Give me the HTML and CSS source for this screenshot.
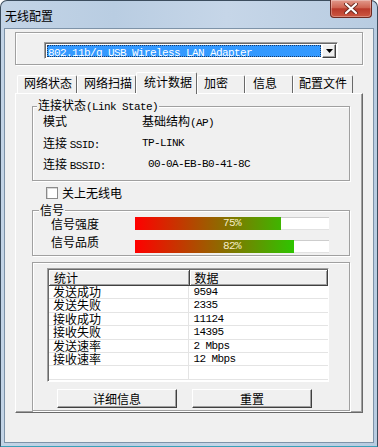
FILE: index.html
```html
<!DOCTYPE html>
<html lang="zh-CN">
<head>
<meta charset="UTF-8">
<title>无线配置</title>
<link rel="stylesheet" href="styles.css">
</head>
<body>

<div class="window">
    <div class="titlebar">
        <span class="title">无线配置</span>
        <div class="close">
            <svg width="14" height="11" viewBox="0 0 14 11">
                <path d="M2 1 L12 10 M12 1 L2 10" stroke="#6b2a20" stroke-width="4" stroke-linecap="round"/>
                <path d="M2 1 L12 10 M12 1 L2 10" stroke="#fff" stroke-width="2.2" stroke-linecap="round"/>
            </svg>
        </div>
    </div>

    <div class="client">
        <div class="adapter-box">
            <div class="combo">
                <div class="combo-value"><span class="en">802.11b/g USB Wireless LAN Adapter</span></div>
                <div class="combo-btn">
                    <svg width="7" height="4" viewBox="0 0 7 4"><path d="M0 0 H7 L3.5 4 Z" fill="#000"/></svg>
                </div>
            </div>
        </div>

        <div class="tabs">
            <div class="tab w60">网络状态</div>
            <div class="tab w59">网络扫描</div>
            <div class="tab active">统计数据</div>
            <div class="tab w48">加密</div>
            <div class="tab w48 p7">信息</div>
            <div class="tab w60 p5">配置文件</div>
        </div>

        <div class="panel">
            <fieldset class="group link">
                <legend>连接状态<span class="en">(Link State)</span></legend>
                <div class="info">
                    <span>模式</span><span>基础结构<span class="en">(AP)</span></span>
                    <span>连接 <span class="en">SSID:</span></span><span class="en">TP-LINK</span>
                    <span>连接 <span class="en">BSSID:</span></span><span class="en bssid">00-0A-EB-B0-41-8C</span>
                </div>
            </fieldset>

            <div class="check"><span class="box"></span>关上无线电</div>

            <fieldset class="group signal">
                <legend>信号</legend>
                <div class="sig">
                    <span class="sig-label">信号强度</span>
                    <div class="bar">
                        <div class="fill" style="width: 75%"></div>
                        <span class="en pct">75%</span>
                    </div>
                    <span class="sig-label second">信号品质</span>
                    <div class="bar">
                        <div class="fill" style="width: 82%"></div>
                        <span class="en pct">82%</span>
                    </div>
                </div>
            </fieldset>

            <fieldset class="group stats">
                <div class="list">
                    <div class="head">
                        <div class="hcell">统计</div>
                        <div class="hcell">数据</div>
                    </div>
                    <div class="row"><div class="cell">发送成功</div><div class="cell en">9594</div></div>
                    <div class="row"><div class="cell">发送失败</div><div class="cell en">2335</div></div>
                    <div class="row"><div class="cell">接收成功</div><div class="cell en">11124</div></div>
                    <div class="row"><div class="cell">接收失败</div><div class="cell en">14395</div></div>
                    <div class="row"><div class="cell">发送速率</div><div class="cell en">2 Mbps</div></div>
                    <div class="row"><div class="cell">接收速率</div><div class="cell en">12 Mbps</div></div>
                    <div class="row"><div class="cell"></div><div class="cell"></div></div>
                </div>
                <div class="buttons">
                    <div class="btn">详细信息</div>
                    <div class="btn">重置</div>
                </div>
            </fieldset>
        </div>
    </div>
</div>

</body>
</html>
```

FILE: styles.css
```css
* {
    box-sizing: border-box;
}
body {
    margin: 0;
    font-family: "Noto Sans CJK SC", sans-serif;
    font-size: 12px;
    color: #000;
    background: #fff;
}
.en {
    font-family: "Liberation Mono", monospace;
    font-size: 11px;
    letter-spacing: -0.6px;
}

/* window frame */
.window {
    width: 378px;
    height: 447px;
    display: flex;
    flex-direction: column;
    padding: 0 3px 3px;
    border: 1px solid #3c4d5e;
    border-bottom-color: #3aa0b8;
    border-radius: 7px 7px 0 0;
    background: linear-gradient(to right, #c3d4e6, #b9cde2 30%, #c6d6e8 60%, #b8cce1);
}
.titlebar {
    height: 27px;
    display: flex;
    align-items: flex-start;
}
.title {
    margin: 7px 0 0 1px;
    line-height: 16px;
}
.close {
    margin: -1px 2px 0 auto;
    width: 42px;
    height: 18px;
    border: 1px solid #6e2a22;
    border-top: none;
    border-radius: 0 0 4px 4px;
    background: linear-gradient(#e29a8c, #cf6452 45%, #b9392a 52%, #cc5842);
    box-shadow: inset 0 0 0 1px rgba(255,255,255,0.3);
    display: flex;
    align-items: center;
    justify-content: center;
}
.client {
    flex: 1;
    background: #f0f0f0;
    border: 1px solid #7e93a8;
    display: flex;
    flex-direction: column;
}

/* adapter combobox */
.adapter-box {
    margin: 3px 10px 0;
    height: 33px;
    border: 1px solid #a0a0a0;
    box-shadow: inset 1px 1px 0 #fff, 1px 1px 0 #fff;
    padding: 9px 24px 0 28px;
}
.combo {
    display: flex;
    height: 17px;
    border: 1px solid;
    border-color: #a0a0a0 #fff #fff #a0a0a0;
    box-shadow: inset 1px 1px 0 #696969;
    background: #fff;
    padding: 2px 1px 1px 2px;
}
.combo-value {
    flex: 1;
    background: #3399ff;
    color: #fff;
    line-height: 12px;
    padding-left: 1px;
    outline: 1px dotted #1a3a66;
    outline-offset: -1px;
}
.combo-btn {
    width: 14px;
    margin: -1px 0 -1px 1px;
    border: 1px solid;
    border-color: #fff #404040 #404040 #fff;
    box-shadow: inset -1px -1px 0 #a0a0a0;
    background: #f0f0f0;
    display: flex;
    align-items: center;
    justify-content: center;
}

/* tabs */
.tabs {
    display: flex;
    align-items: flex-end;
    margin: 7px 10px 0;
    padding-left: 2px;
    height: 21px;
}
.tab {
    height: 18px;
    padding-left: 6px;
    border-top: 1px solid #fff;
    border-left: 1px solid #fff;
    border-right: 1px solid #696969;
    border-radius: 2px 2px 0 0;
    line-height: 14px;
}
.w60 { width: 60px; }
.w59 { width: 59px; }
.w48 { width: 48px; }
.p7 { padding-left: 7px; }
.p5 { padding-left: 5px; }
.tab.active {
    position: relative;
    z-index: 1;
    width: 61px;
    height: 22px;
    margin-bottom: -1px;
    padding: 2px 0 0 7px;
    background: #f0f0f0;
}
.panel {
    margin: 0 10px;
    height: 320px;
    border: 1px solid;
    border-color: #fff #696969 #696969 #fff;
    box-shadow: inset -1px -1px 0 #a0a0a0;
    padding: 4px 0 0 16px;
    display: flex;
    flex-direction: column;
    align-items: flex-start;
}

/* group boxes */
.group {
    margin: 0;
    padding: 0;
    width: 318px;
    min-width: 0;
    border: 1px solid #a0a0a0;
    box-shadow: inset 1px 1px 0 #fff, 1px 1px 0 #fff;
}
.group legend {
    margin-left: 4px;
    padding: 0 1px;
    line-height: 14px;
    background: #f0f0f0;
}
.info {
    display: grid;
    grid-template-columns: 99px auto;
    row-gap: 5.5px;
    padding: 0 0 7px 10px;
    line-height: 14px;
}
.bssid {
    padding-left: 6px;
}
.check {
    display: flex;
    align-items: center;
    gap: 4px;
    margin: 5px 0 0 14px;
    line-height: 14px;
}
.box {
    width: 12px;
    height: 12px;
    border: 1px solid #8a8a8a;
    box-shadow: inset 1px 1px 0 #d8d8d8;
    background: #fff;
}

.signal {
    margin-top: 3px;
}
.signal legend {
    margin-left: 6px;
}
.sig {
    display: grid;
    grid-template-columns: 84px 194px;
    row-gap: 10px;
    padding: 0 0 2px 18px;
}
.sig-label {
    line-height: 13px;
}
.sig-label.second {
    margin-top: -5px;
}
.bar {
    height: 13px;
    display: grid;
    background: #fff;
    box-shadow: inset 0 1px 0 #cdcdcd, inset 0 -1px 0 #e2e2e2;
}
.fill, .pct {
    grid-area: 1 / 1;
}
.fill {
    height: 13px;
    background: linear-gradient(to right, #ff0000, #00f000);
    background-size: 194px 100%;
}
.pct {
    justify-self: center;
    line-height: 13px;
    color: #f4ecc4;
}

/* statistics list */
.stats {
    margin-top: 6px;
    padding: 5px 0 2px 14px;
}
.list {
    width: 282px;
    height: 114px;
    border: 1px solid;
    border-color: #a0a0a0 #fff #fff #a0a0a0;
    box-shadow: inset 1px 1px 0 #696969;
    background: #fff;
    padding: 1px 0 0 1px;
}
.head {
    display: flex;
    height: 16px;
    background: #f0f0f0;
}
.hcell {
    width: 141px;
    padding-left: 5px;
    line-height: 15px;
    border-right: 1px solid #404040;
    border-bottom: 1px solid #404040;
    box-shadow: inset 1px 1px 0 #fff, inset -1px -1px 0 #a0a0a0;
}
.hcell + .hcell {
    width: 139px;
}
.row {
    display: flex;
    height: 13.4px;
    border-bottom: 1px solid #e4e4e4;
}
.cell {
    width: 141px;
    padding-left: 4px;
    line-height: 12.4px;
    border-right: 1px solid #e4e4e4;
}
.cell + .cell {
    padding-left: 5px;
    border-right: none;
}
.buttons {
    display: flex;
    gap: 15px;
    margin-top: 7px;
    padding-left: 10px;
}
.btn {
    width: 120px;
    height: 19px;
    border: 1px solid;
    border-color: #fff #404040 #404040 #fff;
    box-shadow: inset -1px -1px 0 #a0a0a0;
    background: #f0f0f0;
    text-align: center;
    line-height: 17px;
}
```
